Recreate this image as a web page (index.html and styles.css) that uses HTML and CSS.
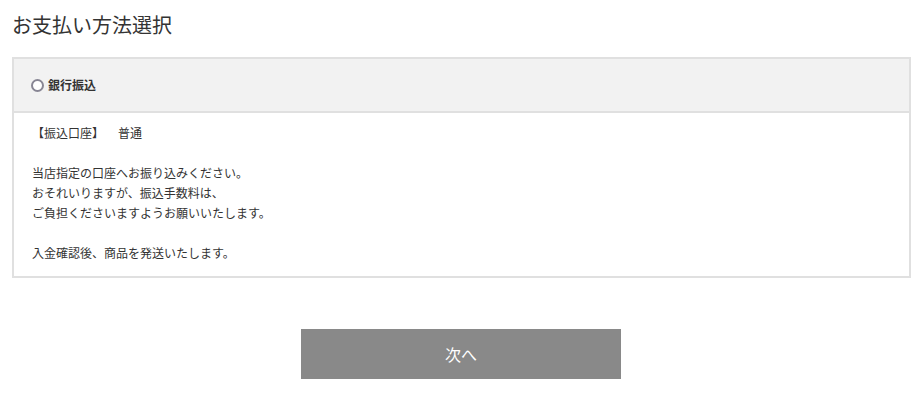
FILE: index.html
```html
<html>
<head>
<meta charset="utf-8">
<title>お支払い方法選択</title>
<link rel="stylesheet" href="styles.css">
</head>
<body>

<div class='page'>
  <h1>お支払い方法選択</h1>

  <div class='method'>
    <label class='head'>
      <span class='radio'></span>
      <span class='name'>銀行振込</span>
    </label>
    <div class='detail'>
      <p>【振込口座】<span class='kind'>普通</span></p>
      <p>当店指定の口座へお振り込みください。<br>
      おそれいりますが、振込手数料は、<br>
      ご負担くださいますようお願いいたします。</p>
      <p>入金確認後、商品を発送いたします。</p>
    </div>
  </div>

  <div class='actions'>
    <button class='next'>次へ</button>
  </div>
</div>

</body>
</html>
```

FILE: styles.css
```css
body{
  margin:0px;
  font-family:"Noto Sans CJK JP", "Liberation Sans", sans-serif;
  color:rgb(51,51,51);
  background:#fff;
}

.page{
  padding:0px 13px 0px 12px;
}

h1{
  font-size:20px;
  font-weight:400;
  line-height:28px;

  margin:0px;
  padding:11px 0px 18px 0px;
}

.method{
  border:2px solid rgb(224,224,224);
}

.method .head{
  display:flex;
  align-items:center;

  height:52px;
  padding:0px 17px;

  background:rgb(242,242,242);
  border-bottom:2px solid rgb(224,224,224);
}
.method .radio{
  width:9px;
  height:9px;

  border:2px solid rgb(136,134,148);
  border-radius:50%;
  background:#fff;

  margin-right:4px;
}
.method .name{
  font-size:12px;
  font-weight:700;
  line-height:14px;
}

.detail{
  padding:10px 18px 13px 18px;
  font-size:12px;
  line-height:20px;
}
.detail p{
  margin:0px 0px 20px 0px;
}
.detail p:last-child{
  margin-bottom:0px;
}
.detail .kind{
  margin-left:14px;
}

.actions{
  display:flex;
  justify-content:center;

  padding:51px 1px 0px 0px;
}
.next{
  width:320px;
  height:50px;

  border:none;
  background:rgb(137,137,137);
  color:#fff;

  font-family:inherit;
  font-size:16px;

  cursor:pointer;
}
```
